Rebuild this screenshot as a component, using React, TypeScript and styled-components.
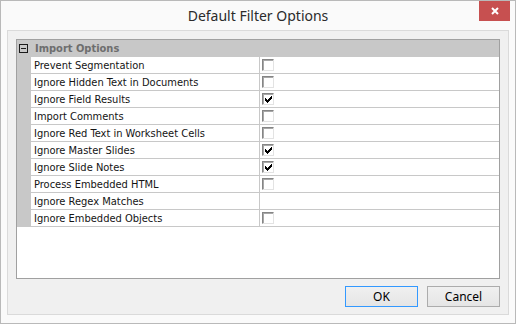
import styled, { createGlobalStyle } from 'styled-components';

const GlobalStyle = createGlobalStyle`
  *, *::before, *::after {
    box-sizing: border-box;
  }
  html, body {
    margin: 0;
    padding: 0;
    background: #ffffff;
  }
`;

const Window = styled.div`
  width: 516px;
  height: 324px;
  border: 1px solid #b9b9b9;
  background: #fafafa;
  display: flex;
  flex-direction: column;
`;

const TitleBar = styled.div`
  height: 29px;
  flex-shrink: 0;
  position: relative;
  display: flex;
  align-items: center;
  justify-content: center;
  font-family: 'Noto Sans', 'Open Sans', sans-serif;
  font-size: 14px;
  color: #2b2b2b;
`;

const CloseButton = styled.div`
  position: absolute;
  top: 0;
  right: 5px;
  width: 31px;
  height: 20px;
  background: #c75050;
  display: flex;
  align-items: center;
  justify-content: center;
`;

const Body = styled.div`
  flex: 1;
  padding: 0 6px 8px 6px;
  display: flex;
`;

const Frame = styled.div`
  flex: 1;
  border: 1px solid #dadada;
  background: #f0f0f0;
  padding: 8px 8px 7px 8px;
  display: flex;
  flex-direction: column;
`;

const Grid = styled.div`
  height: 240px;
  border: 1px solid #a0a0a0;
  background: #ffffff;
  font-family: 'DejaVu Sans Condensed', 'DejaVu Sans', sans-serif;
  font-stretch: condensed;
  font-size: 11px;
  color: #141414;
`;

const HeaderRow = styled.div`
  height: 17px;
  background: #c8c8c8;
  display: flex;
  align-items: center;
  padding-left: 2px;
  gap: 7px;
`;

const Expander = styled.div`
  width: 9px;
  height: 9px;
  border: 1px solid #1a1a1a;
  display: flex;
  align-items: center;
  justify-content: center;

  &::after {
    content: '';
    width: 5px;
    height: 1px;
    background: #1a1a1a;
  }
`;

const HeaderLabel = styled.span`
  font-weight: bold;
  color: #6e6e6e;
`;

const Row = styled.div`
  display: grid;
  grid-template-columns: 14px 229px 1fr;
  height: 17px;
`;

const Gutter = styled.div`
  background: #c8c8c8;
`;

const LabelCell = styled.div`
  border-bottom: 1px solid #c8c8c8;
  border-right: 1px solid #c8c8c8;
  padding-left: 3px;
  display: flex;
  align-items: center;
  white-space: nowrap;
`;

const ValueCell = styled.div`
  border-bottom: 1px solid #c8c8c8;
  padding: 2px 0 0 2px;
`;

const CheckBox = styled.div`
  width: 12px;
  height: 12px;
  border: 1px solid;
  border-color: #858585 #e3e3e3 #e3e3e3 #858585;
  box-shadow: inset 1px 1px 0 #a8a8a8;
  background: #ffffff;
  display: flex;
  align-items: center;
  justify-content: center;
`;

const Footer = styled.div`
  margin-top: 7px;
  display: flex;
  justify-content: flex-end;
  gap: 9px;
`;

const Button = styled.div<{ $default?: boolean }>`
  width: 73px;
  height: 21px;
  border: 1px solid ${(p) => (p.$default ? '#3399ff' : '#acacac')};
  background: linear-gradient(#f0f0f0, #e5e5e5);
  display: flex;
  align-items: center;
  justify-content: center;
  font-family: 'Noto Sans', 'Open Sans', sans-serif;
  font-size: 12px;
  color: #000000;
`;

type Option = { label: string; checked?: boolean; hasBox?: boolean };

const options: Option[] = [
  { label: 'Prevent Segmentation' },
  { label: 'Ignore Hidden Text in Documents' },
  { label: 'Ignore Field Results', checked: true },
  { label: 'Import Comments' },
  { label: 'Ignore Red Text in Worksheet Cells' },
  { label: 'Ignore Master Slides', checked: true },
  { label: 'Ignore Slide Notes', checked: true },
  { label: 'Process Embedded HTML' },
  { label: 'Ignore Regex Matches', hasBox: false },
  { label: 'Ignore Embedded Objects' },
];

// classic 7x7 pixel tick
function CheckMark() {
  return (
    <svg width="7" height="7" viewBox="0 0 7 7" shapeRendering="crispEdges">
      <path
        d="M6 0h1v3h-1v1h-1v1h-1v1h-1v1h-1v-1h-1v-1h-1v-3h1v1h1v1h1v-1h1v-1h1v-1h1z"
        fill="#000"
      />
    </svg>
  );
}

export default function App() {
  return (
    <>
      <GlobalStyle />
      <Window>
        <TitleBar>
          Default Filter Options
          <CloseButton>
            <svg width="8" height="8" viewBox="0 0 8 8">
              <path d="M1 1l6 6M7 1l-6 6" stroke="#fff" strokeWidth="2" />
            </svg>
          </CloseButton>
        </TitleBar>
        <Body>
          <Frame>
            <Grid>
              <HeaderRow>
                <Expander />
                <HeaderLabel>Import Options</HeaderLabel>
              </HeaderRow>
              {options.map((o) => (
                <Row key={o.label}>
                  <Gutter />
                  <LabelCell>{o.label}</LabelCell>
                  <ValueCell>
                    {o.hasBox !== false && <CheckBox>{o.checked && <CheckMark />}</CheckBox>}
                  </ValueCell>
                </Row>
              ))}
            </Grid>
            <Footer>
              <Button $default>OK</Button>
              <Button>Cancel</Button>
            </Footer>
          </Frame>
        </Body>
      </Window>
    </>
  );
}
